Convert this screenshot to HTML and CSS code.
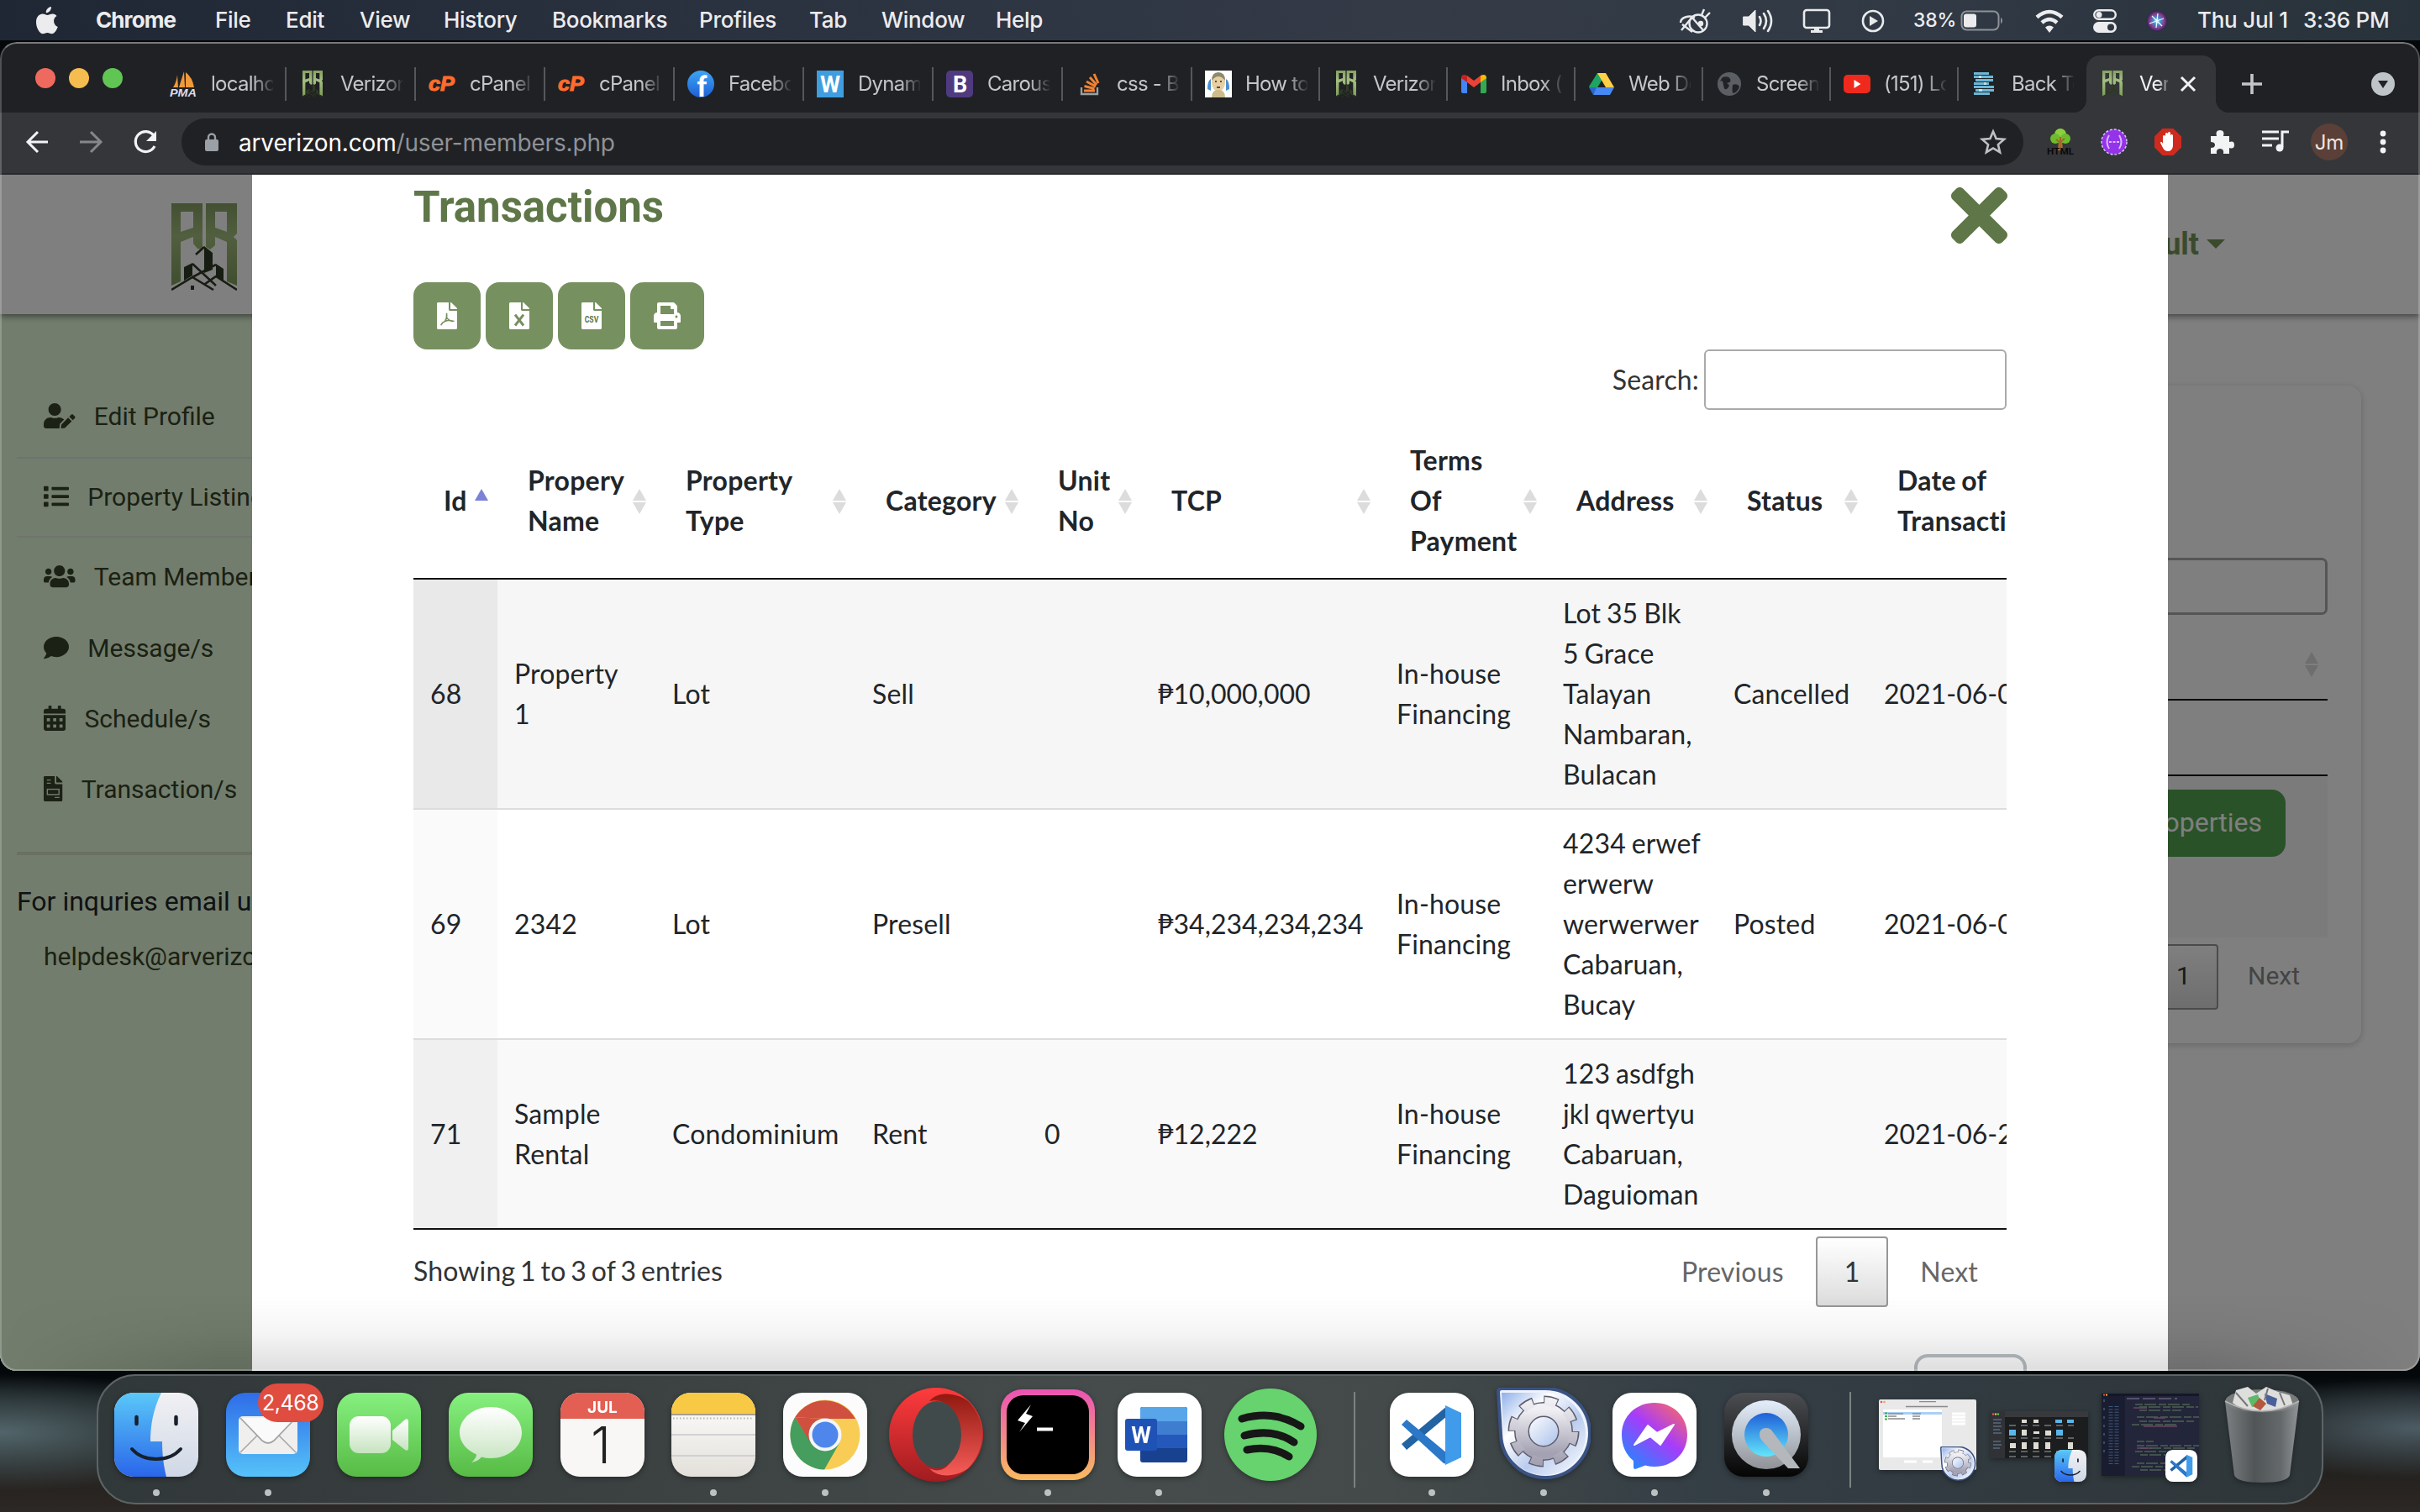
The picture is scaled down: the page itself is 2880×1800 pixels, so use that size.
FILE: index.html
```html
<!DOCTYPE html>
<html lang="en">
<head>
<meta charset="utf-8">
<title>Verizon - Transactions</title>
<link rel="stylesheet" href="styles.css">
</head>
<body>
<svg class="defs" width="0" height="0" aria-hidden="true">
  <defs>
    <linearGradient id="gFinder" x1="0" y1="0" x2="0" y2="1"><stop offset="0" stop-color="#5ac8f8"/><stop offset="1" stop-color="#2a66ea"/></linearGradient>
    <linearGradient id="gFinder2" x1="0" y1="0" x2="0" y2="1"><stop offset="0" stop-color="#f1f1f4"/><stop offset="1" stop-color="#cfd8e6"/></linearGradient>
    <linearGradient id="gMail" x1="0" y1="0" x2="0" y2="1"><stop offset="0" stop-color="#2e6ce8"/><stop offset="1" stop-color="#56c3f9"/></linearGradient>
    <linearGradient id="gGreen" x1="0" y1="0" x2="0" y2="1"><stop offset="0" stop-color="#86f07f"/><stop offset="1" stop-color="#57bb45"/></linearGradient>
    <linearGradient id="gWhite" x1="0" y1="0" x2="0" y2="1"><stop offset="0" stop-color="#ffffff"/><stop offset="1" stop-color="#c6e3bf"/></linearGradient>
    <linearGradient id="gPaper" x1="0" y1="0" x2="0" y2="1"><stop offset="0" stop-color="#ffffff"/><stop offset="1" stop-color="#e3e0da"/></linearGradient>
    <linearGradient id="gRed" x1="0" y1="0" x2="0" y2="1"><stop offset="0" stop-color="#ff3b3d"/><stop offset="1" stop-color="#a01c20"/></linearGradient>
    <linearGradient id="gRed2" x1="0" y1="0" x2="0" y2="1"><stop offset="0" stop-color="#911910"/><stop offset="1" stop-color="#f65c58"/></linearGradient>
    <linearGradient id="gHyper" x1="0" y1="0" x2="0" y2="1"><stop offset="0" stop-color="#ec53b4"/><stop offset="1" stop-color="#f8bb60"/></linearGradient>
    <linearGradient id="gMsgr" x1="0.9" y1="0" x2="0.1" y2="1"><stop offset="0" stop-color="#fd6a64"/><stop offset="0.45" stop-color="#a63cfb"/><stop offset="1" stop-color="#1a8cff"/></linearGradient>
    <linearGradient id="gQt" x1="0" y1="0" x2="0" y2="1"><stop offset="0" stop-color="#4c4e52"/><stop offset="1" stop-color="#050505"/></linearGradient>
    <linearGradient id="gQtR" x1="0" y1="0" x2="0" y2="1"><stop offset="0" stop-color="#e4eefc"/><stop offset="1" stop-color="#8f9296"/></linearGradient>
    <linearGradient id="gQtB" x1="0" y1="0" x2="0" y2="1"><stop offset="0" stop-color="#1f5fd8"/><stop offset="1" stop-color="#63e6fb"/></linearGradient>
    <linearGradient id="gGear" x1="0" y1="0" x2="1" y2="1"><stop offset="0" stop-color="#8fb0ea"/><stop offset="0.3" stop-color="#ffffff"/><stop offset="0.6" stop-color="#b9cbee"/><stop offset="1" stop-color="#ffffff"/></linearGradient>
    <linearGradient id="gCog" x1="0" y1="0" x2="0" y2="1"><stop offset="0" stop-color="#f0f0f4"/><stop offset="1" stop-color="#a3a1b2"/></linearGradient>
    <linearGradient id="gCan" x1="0" y1="0" x2="1" y2="0"><stop offset="0" stop-color="#85888a"/><stop offset="0.4" stop-color="#55595b"/><stop offset="0.75" stop-color="#6a6e70"/><stop offset="1" stop-color="#9b9ea0"/></linearGradient>
    <linearGradient id="gFb" x1="0" y1="0" x2="0" y2="1"><stop offset="0" stop-color="#3da5f5"/><stop offset="1" stop-color="#1d5fd6"/></linearGradient>
    <linearGradient id="gLogo" x1="0" y1="0" x2="0" y2="1"><stop offset="0" stop-color="#86a062"/><stop offset="0.4" stop-color="#a3bf80"/><stop offset="1" stop-color="#7f9c5c"/></linearGradient>
    <radialGradient id="gSiri"><stop offset="0" stop-color="#cfe9f6"/><stop offset="0.35" stop-color="#3f8fd0"/><stop offset="0.7" stop-color="#8a3a8c"/><stop offset="1" stop-color="#26264c"/></radialGradient>
  </defs>
  <symbol id="finder" viewBox="0 0 100 100">
    <rect width="100" height="100" rx="23" fill="url(#gFinder2)"/>
    <path d="M56 0C46 20 43 40 43 58h14c0 16 2 30 5 42H23A23 23 0 0 1 0 77V23A23 23 0 0 1 23 0z" fill="url(#gFinder)"/>
    <path d="M26.500 29v8M73.500 29v8" stroke="#17202c" stroke-width="4.500" stroke-linecap="round"/>
    <path d="M21 67c14 16 44 16 58 0" fill="none" stroke="#17202c" stroke-width="4" stroke-linecap="round"/>
  </symbol>
  <symbol id="vscode" viewBox="0 0 100 100">
    <rect width="100" height="100" rx="23" fill="#fff"/>
    <path d="M14 61l6 7 48-40V16z" fill="#2163a3"/>
    <path d="M14 38l6-6 48 40v13l-4-1z" fill="#2b78c8"/>
    <path d="M66 15l19 9v53l-19 9z" fill="#419beb"/>
  </symbol>
  <symbol id="cog" viewBox="0 0 112 112">
    <path d="M2 5q0-4 4-4h52a53 53 0 1 1-53 54z" fill="#eef3fc" stroke="#3a5384" stroke-width="4"/>
    <path d="M6 6h52a49 49 0 1 1-50 50z" fill="url(#gGear)"/>
    <circle cx="56" cy="52" r="26" fill="none" stroke="#5e5d6e" stroke-width="18"/>
    <circle cx="56" cy="52" r="36" fill="none" stroke="#5e5d6e" stroke-width="13" stroke-dasharray="16 12.270"/>
    <circle cx="56" cy="52" r="26" fill="none" stroke="url(#gCog)" stroke-width="15"/>
    <circle cx="56" cy="52" r="36" fill="none" stroke="url(#gCog)" stroke-width="10" stroke-dasharray="14 14.270" stroke-dashoffset="-1"/>
  </symbol>
  <symbol id="ar" viewBox="0 0 78 104">
    <path d="M0 0h37v55l-6-1-5-6v-8l-15 6v47L0 98zM11 10v24l15-5V10zM41 0h37v36l-4 4 4 4v54l-12-5V46l-14-6v10l-6 5-5-3zM52 10v19l14 5V10z" fill="url(#gLogo)" fill-rule="evenodd"/>
    <path d="M39 51l10 8v20l-10 4zM15 76l10-5v15l-10 6zM53 72l9 6v16l-9-7z" class="ar-tower"/>
    <path d="M0 103l25-15 25 15M29 61l10-9M25 72l28 26M25 88l28-15M40 96l13-9 25 16" fill="none" class="ar-roof"/>
    <path d="M23 98h4v5h-4z" class="ar-tower"/>
  </symbol>
  <symbol id="file" viewBox="0 0 384 512"><path d="M224 136V0H24C10.700 0 0 10.700 0 24v464c0 13.300 10.700 24 24 24h336c13.300 0 24-10.700 24-24V160H248c-13.200 0-24-10.800-24-24zM384 121.900v6.100H256V0h6.100c6.400 0 12.500 2.500 17 7l97.900 98c4.500 4.500 7 10.600 7 16.900z"/></symbol>
</svg>

<div class="desktop">
  <header class="menubar">
    <nav class="menus">
      <svg class="apple" width="28" height="34" viewBox="0 0 28 34"><path d="M19 1c.300 4-2.800 7.300-6.200 7.300C12.300 4.800 15.600 1.500 19 1zM25.500 12c-5.200 3-4.200 10.800 1.300 13-1.300 3.500-4 8.300-7 8.300-2.200 0-2.800-1.300-5.400-1.300s-3.400 1.300-5.400 1.300C5.200 33.300 1 26 1 19.500 1 13 4.800 9.600 8.700 9.600c2.400 0 4.300 1.500 5.700 1.500 1.500 0 3.600-1.700 6.500-1.600 1.900.100 3.500.900 4.600 2.500z" fill="#ececee"/></svg>
      <b>Chrome</b><span>File</span><span>Edit</span><span>View</span><span>History</span><span>Bookmarks</span><span>Profiles</span><span>Tab</span><span>Window</span><span>Help</span>
    </nav>
    <div class="status">
      <svg width="40" height="32" viewBox="0 0 40 32" fill="none" stroke="#e8eaec" stroke-width="2.400"><circle cx="24" cy="19" r="10.500"/><path d="M3 18c0-7 11-9 17-6M4 27L18 10M5 20l12 9M16 11l14 16M28 9l3-7M32 12l6-6"/><circle cx="27" cy="19" r="2" fill="#e8eaec"/></svg>
      <svg width="40" height="32" viewBox="0 0 40 32" fill="none" stroke="#e8eaec" stroke-width="2.600" stroke-linecap="round"><path d="M2 11h6l8-8v26l-8-8H2z" fill="#e8eaec" stroke-linejoin="round" stroke-width="1"/><path d="M21 11q3 5 0 10M26 7q6 9 0 18M31 4q8 12 0 24"/></svg>
      <svg width="34" height="32" viewBox="0 0 34 32"><rect x="2" y="3" width="30" height="21" rx="3" fill="none" stroke="#e8eaec" stroke-width="2.600"/><path d="M14 24h6v3h4v3H10v-3h4z" fill="#e8eaec"/></svg>
      <svg width="28" height="32" viewBox="0 0 28 32"><circle cx="14" cy="16" r="12" fill="none" stroke="#e8eaec" stroke-width="2.600"/><path d="M10 10l10 6-10 6z" fill="#e8eaec"/></svg>
      <span class="percent">38%</span>
      <svg width="52" height="32" viewBox="0 0 52 32"><rect x="1.500" y="4.500" width="44" height="22" rx="6" fill="none" stroke="#8e9298" stroke-width="2"/><rect x="4" y="7.500" width="15" height="16" rx="3" fill="#ececee"/><path d="M48 11.500q4 4 0 8z" fill="#8e9298"/></svg>
      <svg width="34" height="32" viewBox="0 0 34 32" fill="none" stroke="#ececee" stroke-width="4.500"><path d="M2 11.500q15-13 30 0M8 18q9-8 18 0"/><path d="M17 30l-5-6.500q5-4 10 0z" fill="#ececee" stroke="none"/></svg>
      <svg width="30" height="32" viewBox="0 0 30 32"><rect x="2.200" y="3.200" width="25.600" height="10.600" rx="5.300" fill="none" stroke="#ececee" stroke-width="2.400"/><circle cx="8" cy="8.500" r="3.500" fill="#ececee"/><rect x="1" y="17" width="28" height="13" rx="6.500" fill="#ececee"/><circle cx="22" cy="23.500" r="4" fill="#2f3842"/></svg>
      <svg width="28" height="32" viewBox="0 0 28 32"><circle cx="14" cy="16" r="12.500" fill="url(#gSiri)"/><path d="M15 7l-2 17M5 19l17-6M8 10l12 12" stroke="#e6fbff" stroke-width="1.300"/></svg>
      <span class="date">Thu Jul 1</span><span class="time">3:36 PM</span>
    </div>
  </header>

  <main class="window">
    <div class="tabstrip">
      <div class="lights"><i class="red"></i><i class="amber"></i><i class="green"></i></div>
      <div class="tab"><svg class="fav" viewBox="0 0 32 32"><path d="M4 20q4-6 5-15l1 15zM11 20Q14 10 17 1l1 19zM19 20V2q8 6 10 18z" fill="#f09a3a"/><text x="0" y="31" font-size="12" textLength="32" lengthAdjust="spacingAndGlyphs" class="bi" fill="#dcdcf0">PMA</text></svg><span>localhost</span></div>
      <div class="tab"><svg class="fav"><use href="#ar"/></svg><span>Verizon</span></div>
      <div class="tab"><svg class="fav" viewBox="0 0 32 32"><text x="0" y="24" font-size="24" textLength="31" lengthAdjust="spacingAndGlyphs" class="bi" fill="#ff6c2c" stroke="#ff6c2c">cP</text></svg><span>cPanel</span></div>
      <div class="tab"><svg class="fav" viewBox="0 0 32 32"><text x="0" y="24" font-size="24" textLength="31" lengthAdjust="spacingAndGlyphs" class="bi" fill="#ff6c2c" stroke="#ff6c2c">cP</text></svg><span>cPanel</span></div>
      <div class="tab"><svg class="fav" viewBox="0 0 32 32"><circle cx="16" cy="16" r="16" fill="url(#gFb)"/><text x="17.500" y="31" font-size="33" text-anchor="middle" class="bd" fill="#fff">f</text></svg><span>Facebook</span></div>
      <div class="tab"><svg class="fav" viewBox="0 0 32 32"><rect width="32" height="32" fill="#3f9de0"/><text x="16" y="26" font-size="28" textLength="24" lengthAdjust="spacingAndGlyphs" text-anchor="middle" class="bd" fill="#fff">W</text></svg><span>Dynamic</span></div>
      <div class="tab"><svg class="fav" viewBox="0 0 32 32"><rect width="32" height="32" rx="5" fill="#4f3a80"/><text x="16.500" y="25.500" font-size="27" text-anchor="middle" class="bd" fill="#fff">B</text></svg><span>Carousel</span></div>
      <div class="tab"><svg class="fav" viewBox="0 0 32 32" fill="none" stroke-width="2.400"><path d="M7 20v8h19v-8" stroke="#9aa0a4"/><path d="M10 24h13M10.500 18.500l12 3M13 13l11 6M17 8l8 9M22 4l5 11" stroke="#f28232" stroke-width="3"/></svg><span>css - Boot</span></div>
      <div class="tab narrow"><svg class="fav" viewBox="0 0 32 32"><rect width="32" height="32" fill="#fff"/><path d="M3 22q0-10 4-12v14zM29 22q0-10-4-12v14z" fill="#4b8fd0"/><ellipse cx="16" cy="14" rx="8" ry="11" fill="#e6cfa2"/><path d="M8 12q0-10 8-10t8 10q-4-5-8-5t-8 5z" fill="#8b8a6c"/><path d="M8 32q0-9 8-9t8 9z" fill="#cdbb8c"/><path d="M12 13h2M18 13h2M14 20h4" stroke="#6b4c33" stroke-width="2"/></svg><span>How to</span></div>
      <div class="tab narrow"><svg class="fav"><use href="#ar"/></svg><span>Verizon</span></div>
      <div class="tab narrow"><svg class="fav" viewBox="0 0 32 32"><path d="M1 8v17q0 2 2 2h5V13z" fill="#4285f4"/><path d="M31 8v17q0 2-2 2h-5V13z" fill="#34a853"/><path d="M8 14V6l8 6 8-6v8l-8 6z" fill="#ea4335"/><path d="M1 8q1-5 7-2v8l-7-5z" fill="#c5221f"/><path d="M31 8q-1-5-7-2v8l7-5z" fill="#fbbc04"/></svg><span>Inbox (1)</span></div>
      <div class="tab narrow"><svg class="fav" viewBox="0 0 32 32"><path d="M11 3h10l-5 9-9 15-6-8z" fill="#1fa463"/><path d="M11 3h10l10 17H21z" fill="#ffcf48"/><path d="M10 20h21l-5 9H6z" fill="#4688f4"/><path d="M1 20l9 0-4 9z" fill="#2a66cc"/></svg><span>Web Dev</span></div>
      <div class="tab narrow"><svg class="fav" viewBox="0 0 32 32"><circle cx="16" cy="16" r="14" fill="#5b5e62"/><path d="M8 8q7-2 9 2t-4 5q5 2 1 6t-5-4-5-3zM20 17q6-2 8 2-2 7-8 8-1-5 0-10z" fill="#212225"/></svg><span>Screen</span></div>
      <div class="tab narrow"><svg class="fav" viewBox="0 0 32 32"><rect y="5" width="32" height="22" rx="5" fill="#f0291d"/><path d="M12.500 11l8 5-8 5z" fill="#fff"/></svg><span>(151) Lo</span></div>
      <div class="tab narrow last"><svg class="fav" viewBox="0 0 32 32" stroke="#6cb7d6" stroke-width="3" fill="none"><path d="M3 3.500h18M3 7.500h23M5 11.500h21M3 15.500h18M3 19.500h24M5 23.500h22M3 27.500h19" /><path d="M9 7.500h3M15 15.500h3M9 23.500h4" stroke="#bfe2ee"/></svg><span>Back To</span></div>
      <div class="tab active"><svg class="fav"><use href="#ar"/></svg><span>Verizon</span><svg class="x" width="20" height="20" viewBox="0 0 20 20"><path d="M2 2l16 16M18 2L2 18" stroke="#f1f3f4" stroke-width="3"/></svg></div>
      <svg class="plus" width="26" height="26" viewBox="0 0 26 26"><path d="M13 1v24M1 13h24" stroke="#c3c6c9" stroke-width="3.600"/></svg>
      <svg class="drop" width="28" height="28" viewBox="0 0 28 28"><circle cx="14" cy="14" r="14" fill="#bfc4c9"/><path d="M8 10h12l-6 9z" fill="#202124"/></svg>
    </div>

    <div class="toolbar">
      <svg width="64" height="32" viewBox="0 0 64 32" fill="none" stroke="#f1f3f4" stroke-width="3"><path d="M57 16H34M45 4L33 16l12 12"/></svg>
      <svg width="64" height="32" viewBox="0 0 64 32" fill="none" stroke="#85878a" stroke-width="3"><path d="M31 16h24M44 4l12 12-12 12"/></svg>
      <svg width="64" height="32" viewBox="0 0 64 32" fill="none" stroke="#f1f3f4" stroke-width="3.200"><path d="M55 8.500A12 12 0 1 0 56 21"/><path d="M58 3v12H46z" fill="#f1f3f4" stroke="none"/></svg>
      <div class="omnibox">
        <svg width="18" height="24" viewBox="0 0 18 24"><rect x="1" y="9" width="16" height="14" rx="2" fill="#9aa0a6"/><path d="M5 9V6.500a4 4 0 0 1 8 0V9" fill="none" stroke="#9aa0a6" stroke-width="2.400"/></svg>
        <span class="url"><b>arverizon.com</b>/user-members.php</span>
        <svg class="star" width="32" height="32" viewBox="0 0 32 32"><path d="M16 3.500l3.600 8.600 9.400.800-7.100 6.200 2.200 9.100L16 23.400l-8.100 4.800 2.200-9.100L3 12.900l9.400-.800z" fill="none" stroke="#bdc1c6" stroke-width="2.600"/></svg>
      </div>
      <div class="exts">
        <svg width="32" height="32" viewBox="0 0 32 32"><path d="M14 14h4l1 12h-6z" fill="#b5702c"/><circle cx="16" cy="7" r="7" fill="#8bd13f"/><circle cx="10" cy="12" r="6" fill="#6cbc2c"/><circle cx="22" cy="12" r="6" fill="#6cbc2c"/><path d="M16 24V10M16 16l5-4M16 17l-5-4" stroke="#a2662b" stroke-width="2"/><text x="0" y="31" font-size="10" textLength="32" lengthAdjust="spacingAndGlyphs" class="bd" fill="#0a0a0a">HTML</text></svg>
        <svg width="32" height="32" viewBox="0 0 32 32"><circle cx="16" cy="16" r="15" fill="#9333ea" stroke="#dcc0fa" stroke-width="1.500" stroke-dasharray="3 2"/><path d="M10 8q-5 8 0 16M22 8q5 8 0 16M10 16h3M14.500 16h3M19 16h3" stroke="#d9b8ff" stroke-width="2" fill="none"/></svg>
        <svg width="32" height="32" viewBox="0 0 32 32"><path d="M9.500 0h13L32 9.500v13L22.500 32h-13L0 22.500v-13z" fill="#cf2a1e"/><path d="M10 18v-9q1.500-2 3 0V6q1.500-2 3 0V5q1.500-2 3 0v3q1.500-2 3 0v13q-1 6-6 6-4 0-6-4l-3-6q1-3 3 1z" fill="#fff"/></svg>
        <svg width="32" height="32" viewBox="0 0 32 32"><path d="M3 9h7q-2-7 4-7t4 7h7v7q6-2 6 3.500T25 23v7h-7q1-6-4-6t-4 6H3v-7q5 0 5-3.500T3 16z" fill="#f1f3f4"/></svg>
        <svg width="32" height="32" viewBox="0 0 32 32"><path d="M0 4h20M0 12h20M0 20h12" stroke="#f1f3f4" stroke-width="3"/><path d="M24 22V4h8" stroke="#f1f3f4" stroke-width="3" fill="none"/><circle cx="21" cy="23" r="4.500" fill="#f1f3f4"/></svg>
      </div>
      <span class="avatar">Jm</span>
      <svg width="8" height="28" viewBox="0 0 8 28" fill="#f1f3f4"><circle cx="4" cy="4" r="3.400"/><circle cx="4" cy="14" r="3.400"/><circle cx="4" cy="24" r="3.400"/></svg>
    </div>

    <section class="page">
      <div class="navbar">
        <svg class="logo" width="78" height="104"><use href="#ar"/></svg>
        <span class="account">Default<i></i></span>
      </div>
      <div class="layout">
        <aside class="sidebar">
          <a class="item edit"><svg width="37.500" height="30" viewBox="0 0 640 512"><path d="M224 256c70.700 0 128-57.300 128-128S294.700 0 224 0 96 57.300 96 128s57.300 128 128 128zm89.600 32h-16.700c-22.200 10.200-46.900 16-72.900 16s-50.600-5.800-72.900-16h-16.700C60.200 288 0 348.200 0 422.400V464c0 26.500 21.500 48 48 48h274.900c-2.400-6.800-3.400-14-2.600-21.300l6.800-60.900 1.200-11.100 7.900-7.900 77.300-77.300c-24.500-27.700-60-45.500-99.900-45.500zm45.300 145.300l-6.800 61c-1.100 10.200 7.500 18.800 17.600 17.600l60.900-6.800 137.900-137.900-71.700-71.700-137.900 137.800zM633 268.900L595.100 231c-9.300-9.300-24.500-9.300-33.800 0l-37.800 37.800-4.100 4.100 71.800 71.700 41.800-41.800c9.300-9.400 9.300-24.500 0-33.900z"/></svg>Edit Profile</a>
          <a class="item listing"><svg width="30" height="30" viewBox="0 0 512 512"><rect y="48" width="96" height="96" rx="16"/><rect y="208" width="96" height="96" rx="16"/><rect y="368" width="96" height="96" rx="16"/><rect x="160" y="64" width="352" height="64" rx="16"/><rect x="160" y="224" width="352" height="64" rx="16"/><rect x="160" y="384" width="352" height="64" rx="16"/></svg>Property Listings</a>
          <a class="item team"><svg width="37.500" height="30" viewBox="0 0 640 512"><path d="M96 224c35.300 0 64-28.700 64-64s-28.700-64-64-64-64 28.700-64 64 28.700 64 64 64zm448 0c35.300 0 64-28.700 64-64s-28.700-64-64-64-64 28.700-64 64 28.700 64 64 64zm32 32h-64c-17.600 0-33.500 7.100-45.100 18.600 40.300 22.100 68.900 62 75.100 109.400h66c17.700 0 32-14.300 32-32v-32c0-35.300-28.700-64-64-64zm-256 0c61.900 0 112-50.100 112-112S381.900 32 320 32 208 82.100 208 144s50.100 112 112 112zm76.800 32h-8.300c-20.800 10-43.900 16-68.500 16s-47.600-6-68.500-16h-8.300C179.600 288 128 339.600 128 403.200V432c0 26.500 21.500 48 48 48h288c26.500 0 48-21.500 48-48v-28.800c0-63.600-51.600-115.200-115.200-115.200zm-223.700-13.400C161.500 263.100 145.600 256 128 256H64c-35.300 0-64 28.700-64 64v32c0 17.700 14.300 32 32 32h65.900c6.300-47.400 34.900-87.300 75.200-109.400z"/></svg>Team Members</a>
          <a class="item"><svg width="30" height="30" viewBox="0 0 512 512"><path d="M256 32C114.600 32 0 125.100 0 240c0 49.600 21.400 95 57 130.700C44.500 421.100 2.700 466 2.200 466.500c-2.200 2.300-2.800 5.700-1.500 8.700S4.800 480 8 480c66.300 0 116-31.800 140.600-51.400 32.700 12.300 69 19.400 107.400 19.400 141.400 0 256-93.100 256-208S397.400 32 256 32z"/></svg>Message/s</a>
          <a class="item"><svg width="26.250" height="30" viewBox="0 0 448 512"><path fill-rule="evenodd" d="M0 464c0 26 22 48 48 48h352c26 0 48-22 48-48V192H0zM64 256h64v64H64zM192 256h64v64h-64zM320 256h64v64h-64zM64 384h64v64H64zM192 384h64v64h-64zM320 384h64v64h-64zM400 64h-48V12c0-6-5-12-12-12h-40c-7 0-12 6-12 12v52H160V12c0-6-5-12-12-12h-40c-7 0-12 6-12 12v52H48C22 64 0 86 0 112v48h448v-48c0-26-22-48-48-48z"/></svg>Schedule/s</a>
          <a class="item"><svg width="22.500" height="30" viewBox="0 0 384 512"><use href="#file" width="384" height="512"/><path d="M64 80h80M64 144h80M224 432h96" stroke="#e5fbdb" stroke-width="20"/><rect x="74" y="266" width="236" height="108" fill="none" stroke="#e5fbdb" stroke-width="24"/></svg>Transaction/s</a>
          <hr>
          <p class="inquiries">For inquries email us</p>
          <p class="mail">helpdesk@arverizon.com</p>
        </aside>
        <div class="card">
          <div class="card-input"></div>
          <div class="card-head"><i class="sort"></i></div>
          <div class="card-row"></div>
          <div class="card-row tinted"><span class="btn-properties">Properties</span></div>
          <div class="card-pages"><span class="current">1</span><span>Next</span></div>
        </div>
      </div>
      <div class="overlay"></div>

      <div class="modal">
        <div class="modal-head">
          <h1>Transactions</h1>
          <svg width="67" height="67" viewBox="0 80 352 352"><path fill="#5f7748" d="M242.720 256l100.070-100.070c12.280-12.280 12.280-32.190 0-44.480l-22.240-22.240c-12.280-12.280-32.190-12.280-44.480 0L176 189.280 75.930 89.210c-12.280-12.280-32.190-12.280-44.480 0L9.210 111.450c-12.280 12.280-12.280 32.190 0 44.480L109.280 256 9.210 356.070c-12.280 12.280-12.280 32.190 0 44.480l22.240 22.240c12.280 12.280 32.200 12.280 44.480 0L176 322.720l100.070 100.070c12.280 12.280 32.200 12.280 44.480 0l22.240-22.240c12.280-12.280 12.280-32.190 0-44.480L242.720 256z"/></svg>
        </div>
        <div class="exports">
          <button><svg width="24" height="32" viewBox="0 0 384 512"><use href="#file" width="384" height="512"/><path d="M80 425q20-45 75-65 40-60 30-145M155 360q60-30 150-5-50 20-125-70" fill="none" stroke="#77905f" stroke-width="26" stroke-linecap="round"/></svg></button>
          <button><svg width="24" height="32" viewBox="0 0 384 512"><use href="#file" width="384" height="512"/><path d="M112 235l160 205M272 235L112 440" stroke="#77905f" stroke-width="48"/></svg></button>
          <button><svg width="24" height="32" viewBox="0 0 384 512"><use href="#file" width="384" height="512"/><text x="60" y="376" font-size="165" textLength="264" lengthAdjust="spacingAndGlyphs" class="bd" fill="#5d7844">CSV</text></svg></button>
          <button class="print"><svg width="32" height="32" viewBox="0 0 512 512"><path d="M448 192V77.250c0-8.490-3.370-16.620-9.370-22.630L393.370 9.370c-6-6-14.140-9.370-22.630-9.370H96C78.330 0 64 14.330 64 32v160c-35.350 0-64 28.650-64 64v112c0 8.840 7.160 16 16 16h48v96c0 17.670 14.330 32 32 32h320c17.670 0 32-14.330 32-32v-96h48c8.840 0 16-7.160 16-16V256c0-35.350-28.650-64-64-64zm-64 256H128v-96h256v96zm0-224H128V64h192v48c0 8.840 7.160 16 16 16h48v96zm48 72c-13.250 0-24-10.750-24-24 0-13.260 10.750-24 24-24s24 10.740 24 24c0 13.250-10.750 24-24 24z"/></svg></button>
        </div>
        <label class="filter">Search:<span class="field"></span></label>
        <div class="table-wrap">
          <table>
            <colgroup><col class="c-id"><col class="c-name"><col class="c-type"><col class="c-cat"><col class="c-unit"><col class="c-tcp"><col class="c-terms"><col class="c-addr"><col class="c-status"><col class="c-date"></colgroup>
            <thead><tr>
              <th>Id<i class="sort asc"></i></th><th>Propery<br>Name<i class="sort"></i></th><th>Property<br>Type<i class="sort"></i></th><th>Category<i class="sort"></i></th><th>Unit<br>No<i class="sort"></i></th><th>TCP<i class="sort"></i></th><th>Terms<br>Of<br>Payment<i class="sort"></i></th><th>Address<i class="sort"></i></th><th>Status<i class="sort"></i></th><th>Date of<br>Transaction<i class="sort"></i></th>
            </tr></thead>
            <tbody>
              <tr class="r1"><td>68</td><td>Property<br>1</td><td>Lot</td><td>Sell</td><td></td><td class="num">₱10,000,000</td><td>In-house<br>Financing</td><td>Lot 35 Blk<br>5 Grace<br>Talayan<br>Nambaran,<br>Bulacan</td><td>Cancelled</td><td class="num">2021-06-03</td></tr>
              <tr class="r2"><td>69</td><td>2342</td><td>Lot</td><td>Presell</td><td></td><td class="num">₱34,234,234,234</td><td>In-house<br>Financing</td><td>4234 erwef<br>erwerw<br>werwerwer<br>Cabaruan,<br>Bucay</td><td>Posted</td><td class="num">2021-06-03</td></tr>
              <tr class="r3"><td>71</td><td>Sample<br>Rental</td><td>Condominium</td><td>Rent</td><td>0</td><td class="num">₱12,222</td><td>In-house<br>Financing</td><td>123 asdfgh<br>jkl qwertyu<br>Cabaruan,<br>Daguioman</td><td></td><td class="num">2021-06-29</td></tr>
            </tbody>
          </table>
        </div>
        <div class="table-foot">
          <span class="info">Showing 1 to 3 of 3 entries</span>
          <div class="pages"><span>Previous</span><span class="current">1</span><span>Next</span></div>
        </div>
        <div class="modal-foot"><span class="btn-outline"></span></div>
      </div>
      <div class="dock-shade"></div>
    </section>
  </main>

  <footer class="dock">
    <div class="app on"><svg width="100" height="100"><use href="#finder"/></svg></div>
    <div class="app on"><svg width="100" height="100" viewBox="0 0 100 100"><rect width="100" height="100" rx="23" fill="url(#gMail)"/><rect x="15" y="28" width="70" height="45" rx="5" fill="#f0efee"/><path d="M17 71l20-20M83 71L63 51" stroke="#a5a5a5" stroke-width="1.500"/><path d="M17 30l26 27q7 6 14 0l26-27" fill="#fafafa" stroke="#a5a5a5" stroke-width="1.800"/></svg><span class="badge">2,468</span></div>
    <div class="app"><svg width="100" height="100" viewBox="0 0 100 100"><rect width="100" height="100" rx="23" fill="url(#gGreen)"/><rect x="15" y="28" width="49" height="44" rx="11" fill="url(#gWhite)"/><path d="M66 45l15-13q4-2 4 2v32q0 4-4 2L66 56z" fill="url(#gWhite)"/></svg></div>
    <div class="app"><svg width="100" height="100" viewBox="0 0 100 100"><rect width="100" height="100" rx="23" fill="url(#gGreen)"/><path d="M50 17c20 0 37 13 37 30.500S70 78 50 78q-6 0-11-1.500-4 5-12 6.500 6-5 6-9.500C21 68 13 59 13 47.500 13 30 30 17 50 17z" fill="url(#gWhite)"/></svg></div>
    <div class="app"><svg width="100" height="100" viewBox="0 0 100 100"><rect width="100" height="100" rx="23" fill="#f8f7f5"/><path d="M0 31V23A23 23 0 0 1 23 0h54a23 23 0 0 1 23 23v8z" fill="#e35f53"/><text x="50" y="23.500" font-size="19" text-anchor="middle" class="ui b" fill="#fff">JUL</text><text x="48" y="84" font-size="60" text-anchor="middle" class="ui l" fill="#222">1</text></svg></div>
    <div class="app on"><svg width="100" height="100" viewBox="0 0 100 100"><rect width="100" height="100" rx="23" fill="url(#gPaper)"/><path d="M0 25v-2A23 23 0 0 1 23 0h54a23 23 0 0 1 23 23v2z" fill="#f8c944"/><path d="M0 26h100" stroke="#a89f8c" stroke-width="2"/><path d="M2 30.500h96" stroke="#b9b6b0" stroke-width="2" stroke-dasharray="1.500 2.500"/><path d="M0 50h100M0 75h100" stroke="#c9c8cc" stroke-width="1.600"/></svg></div>
    <div class="app on"><svg width="100" height="100" viewBox="0 0 100 100"><rect width="100" height="100" rx="23" fill="#fcfcfc"/><circle cx="50" cy="50" r="41.500" fill="#f9cd55"/><path d="M14.060 29.250A41.500 41.500 0 0 1 86 31H50z" fill="#d0503f"/><path d="M14 29.200L32 60l18-10V31z" fill="#d0503f"/><path d="M14 29.200A41.500 41.500 0 0 0 49 91.500L67 60 50 66 33 60z" fill="#459d5e"/><circle cx="50" cy="50" r="19.500" fill="#f4f6f8"/><circle cx="50" cy="50" r="15.500" fill="#4f86ec"/></svg></div>
    <div class="app"><svg width="112" height="112" viewBox="0 0 112 112"><circle cx="56" cy="56" r="56" fill="url(#gRed)"/><path d="M48 16C60 2 84 8 94 16a56 56 0 0 1 0 80C84 104 60 110 48 96c40 20 50-90 0-80z" fill="url(#gRed2)"/><ellipse cx="57" cy="56" rx="29" ry="40" fill="#414a4a"/></svg></div>
    <div class="app on"><svg width="112" height="108" viewBox="0 0 112 108"><rect width="112" height="108" rx="25" fill="url(#gHyper)"/><rect x="7" y="7" width="98" height="94" rx="20"/><path d="M36 18L20 37l9 3-7 11 16-19-8-3z" fill="#fff"/><path d="M43 47.500h19" stroke="#fff" stroke-width="4"/></svg></div>
    <div class="app on"><svg width="100" height="100" viewBox="0 0 100 100"><rect width="100" height="100" rx="23" fill="#fff"/><rect x="27" y="17" width="56" height="66" rx="3" fill="#18428f"/><path d="M27 66V20q0-3 3-3h50q3 0 3 3v46z" fill="#2459bb"/><path d="M27 50V20q0-3 3-3h50q3 0 3 3v30z" fill="#3f7dd0"/><path d="M27 34V20q0-3 3-3h50q3 0 3 3v14z" fill="#59a5ea"/><rect x="9" y="31" width="38" height="38" rx="3" fill="#1f52b5"/><text x="28" y="60" font-size="27" text-anchor="middle" class="bd" fill="#fff">W</text></svg></div>
    <div class="app"><svg width="110" height="110" viewBox="0 0 110 110"><circle cx="55" cy="55" r="55" fill="#66d36e"/><path d="M21 36q38-11 70 9M24 56q34-9 59 8M27 73q28-6 50 8" fill="none" stroke="#171717" stroke-linecap="round" stroke-width="9"/></svg></div>
    <i class="divider"></i>
    <div class="app on"><svg width="100" height="100"><use href="#vscode"/></svg></div>
    <div class="app on"><svg width="112" height="112"><use href="#cog"/></svg></div>
    <div class="app on"><svg width="100" height="100" viewBox="0 0 100 100"><rect width="100" height="100" rx="23" fill="#fff"/><path d="M50 12c22 0 39 16 39 38S72 88 50 88q-5 0-11-1.500L27 91q-2 0-2-3v-7C16 74 11 63 11 50c0-22 17-38 39-38z" fill="url(#gMsgr)"/><path d="M26 62l16-23 11 9 20-10-16 24-12-10z" fill="#fff" stroke="#fff" stroke-width="2" stroke-linejoin="round"/></svg></div>
    <div class="app on"><svg width="100" height="100" viewBox="0 0 100 100"><rect width="100" height="100" rx="23" fill="url(#gQt)"/><circle cx="50" cy="50" r="41" fill="url(#gQtR)"/><circle cx="50" cy="50" r="26" fill="url(#gQtB)"/><path d="M42 50q0-8 8-8 5 0 8 5l32 43H76L44 56q-2-3-2-6z" fill="#b4b8bd"/></svg></div>
    <i class="divider"></i>
    <div class="app"><svg width="116" height="112" viewBox="0 0 116 112"><rect y="14" width="116" height="84" rx="2" fill="#e9e9ea"/><rect x="5" y="26" width="70" height="57" fill="#fff"/><rect x="5" y="29" width="70" height="3" fill="#a9d0f7"/><circle cx="3" cy="17" r="1.300" fill="#e55"/><circle cx="6.500" cy="17" r="1.300" fill="#f96"/><path d="M48 16.700h20M32 22.500h50M11 31h18M11 34h10M11 37h20M40 31h10M40 34h9M40 37h9" stroke="#8b8b8e" stroke-width="1.300"/><path d="M87 31h16M87 35h16M87 39h16M87 43h16M30 88h15M52 88h12" stroke="#fff" stroke-width="3"/><path d="M7 30.500h3M7 34h3M7 37.500h3" stroke="#3bb44a" stroke-width="2"/><use href="#cog" x="72" y="70" width="44" height="42"/></svg></div>
    <div class="app"><svg width="116" height="112" viewBox="0 0 116 112"><rect y="28" width="116" height="56" rx="2" fill="#1c1d1f"/><rect y="28" width="17" height="56" fill="#303236"/><rect x="17" y="28" width="99" height="7" fill="#38393d"/><circle cx="3" cy="31.500" r="1.200" fill="#e55"/><circle cx="6" cy="31.500" r="1.200" fill="#fb4"/><circle cx="9" cy="31.500" r="1.200" fill="#5c5"/><path d="M3 38h10M3 42h9M3 46h10M3 50h8M3 54h10M3 64h9M3 68h10M3 72h8" stroke="#6886a5" stroke-width="1"/><path d="M37 38h6v4h-6zM51 38h6v4h-6zM37 50h6v7h-6zM23 66h7v6h-7zM37 65h6v8h-6zM51 65h6v8h-6zM65 65h6v8h-6zM92 65h6v8h-6zM51 52h7v3h-7zM65 51h7v6h-7z" fill="#dedbd2"/><path d="M77 38h8v4h-8zM91 38h8v4h-8zM22 50h8v7h-8zM78 50h8v7h-8z" fill="#58b7ea"/><path d="M22 60h77M22 76h60M22 45h77M22 82h60" stroke="#77787a" stroke-width="1.500" stroke-dasharray="8 6"/><use href="#finder" x="76" y="74" width="38" height="38"/></svg></div>
    <div class="app"><svg width="116" height="112" viewBox="0 0 116 112"><rect y="7" width="116" height="98" rx="2" fill="#23253a"/><rect y="7" width="28" height="98" fill="#1a1d30"/><rect y="7" width="116" height="3" fill="#151728"/><circle cx="3" cy="8.700" r="1.100" fill="#e55"/><circle cx="6" cy="8.700" r="1.100" fill="#fb4"/><path d="M3 14v70" stroke="#54789a" stroke-dasharray="3 7"/><path d="M11 22v70M18 22v70" stroke="#39597a" stroke-width="5" stroke-dasharray="1 2.400"/><path d="M30 13h60" stroke="#56526a" stroke-width="2" stroke-dasharray="15 4"/><path d="M40 20h66M45 23h70M45 27h50M42 35h74M45 40h66M36 44h56M42 64h20M42 69h74M46 72h65M40 76h60M46 80h30M42 90h34M36 94h40M46 98h30" stroke="#4d6152" stroke-width="1.600" stroke-dasharray="9 2 14 3"/><path d="M38 24h16M62 36h14M50 46h40M42 72h18" stroke="#6c4668" stroke-width="1.500"/><use href="#vscode" x="76" y="74" width="38" height="38"/></svg></div>
    <div class="app"><svg width="90" height="116" viewBox="0 0 90 116"><ellipse cx="45" cy="18" rx="44" ry="14" fill="#777b7c"/><path d="M10 20L14 5l14-4 10 8 12-8 14 6 14 4 4 12-12 7H24z" fill="#dedfdd"/><path d="M28 14l12-4 4 10-11 5z" fill="#5fb96a"/><path d="M48 9l15 6-2 10-10-4z" fill="#49609b"/><path d="M42 14l8 7-7 8-9-5z" fill="#b3593d"/><path d="M14 8l14 16M52 3l-4 14M66 8l6 15" stroke="#777" stroke-width="2"/><path d="M1 18q44 24 88 0l-11 88q-3 9-33 9t-33-9z" fill="url(#gCan)" opacity=".92"/><path d="M1 18q44 24 88 0" fill="none" stroke="#b2b4b5" stroke-width="1.500"/></svg></div>
  </footer>
</div>
</body>
</html>
```
FILE: styles.css
```css
* { box-sizing: border-box; }
body { margin: 0; background: #0b0e10; overflow: hidden; }
.defs { position: absolute; }
svg { display: block; flex: none; }
.bi { font-family: "Liberation Sans", sans-serif; font-weight: 700; font-style: italic; }
.bd { font-family: Roboto, sans-serif; font-weight: 700; }
.ui { font-family: Inter, sans-serif; }
.ui.b { font-weight: 700; }
.ui.l { font-weight: 300; }

.desktop {
  width: 2880px; height: 1800px; display: flex; flex-direction: column; align-items: center;
  background:
    radial-gradient(ellipse 300px 70px at 0 1705px, #52656a, transparent),
    radial-gradient(ellipse 260px 60px at 2880px 1700px, #4d5c64, transparent),
    linear-gradient(#05080b 0, #05080b 1640px, #111618 1665px, #2b2622 1790px, #2b2928 1800px);
}

/* macOS menu bar */
.menubar {
  width: 2880px; height: 48px; margin-bottom: 2px; display: flex; justify-content: space-between; align-items: center;
  background: linear-gradient(90deg, #1f2735, #2b3240 33%, #343b47 58%, #303944 80%, #28323a);
  color: #ececee; font: 500 26px/48px Inter, sans-serif; letter-spacing: -.300px;
}
.menus {
  display: grid; align-items: center; white-space: nowrap; padding-left: 42px;
  grid-template-columns: 72px 142px 84px 88px 100px 129px 175px 131px 86px 136px 60px;
}
.menus b { font-weight: 700; letter-spacing: -.900px; }
.status { display: grid; align-items: center; white-space: nowrap; padding-top: 2px; margin-right: 3px;
  grid-template-columns: 76px 72px 70px 62px 56px 89px 68px 63px 62px 126px 136px; }
.status .percent { font-size: 23px; }
.status span { margin-top: -2px; letter-spacing: -.250px; }

/* browser window */
.window { position: relative; width: 2880px; height: 1582px; border-radius: 20px; overflow: hidden; background: #202124; }
.window::after { content: ""; position: absolute; inset: 0; border: 2px solid rgba(255,255,255,.220); border-top-color: rgba(255,255,255,.400); border-radius: 20px; }
.tabstrip { display: flex; height: 84px; padding-top: 16px; align-items: center; font: 400 24px/32px Inter, sans-serif; color: #c4c7ca; }
.lights { width: 187px; padding: 0 0 14px 42px; display: flex; gap: 16px; }
.lights i { width: 24px; height: 24px; border-radius: 50%; }
.red { background: #ee6a5f; }
.amber { background: #f5bd4f; }
.green { background: #61c554; }
.tab { width: 154px; height: 40px; padding-left: 15px; border-right: 2px solid #55575b; display: flex; align-items: center; gap: 17px; }
.tab.narrow { width: 152px; gap: 16px; }
.tab.last { border-right-color: transparent; }
.tab span { width: 74px; overflow: hidden; white-space: nowrap; letter-spacing: -.750px; mask-image: linear-gradient(90deg, #000 50px, transparent 76px); }
.tab .fav { width: 32px; height: 32px; }
.ar-tower { fill: #2f3a24; }
.ar-roof { stroke: #2f3a24; stroke-width: 2.600; }
.tab.active { position: relative; width: 154px; height: 68px; padding-left: 15px; gap: 16px; border: 0; border-radius: 16px 16px 0 0; background: #35363a; }
.tab.active::before, .tab.active::after { content: ""; position: absolute; bottom: 0; width: 16px; height: 16px; }
.tab.active::before { left: -16px; background: radial-gradient(circle at 0 0, transparent 16px, #35363a 16.500px); }
.tab.active::after { right: -16px; background: radial-gradient(circle at 100% 0, transparent 16px, #35363a 16.500px); }
.tab.active span { width: 34px; color: #f1f3f4; mask-image: linear-gradient(90deg, #000 22px, transparent 38px); }
.tab.active .x { margin-left: -2px; }
.plus { margin-left: 30px; }
.drop { margin-left: 129px; }
.toolbar { display: flex; height: 74px; padding-bottom: 2px; align-items: center; background: #35363a; border-bottom: 2px solid #29292b; }
.omnibox { width: 2192px; height: 56px; margin-left: 24px; padding: 0 20px 0 27px; display: flex; align-items: center; border-radius: 28px; background: #202124; }
.url { margin: 2px 0 0 23px; flex: 1; font: 400 28px/56px Inter, sans-serif; color: #8f9296; letter-spacing: -.170px; }
.url b { font-weight: 400; color: #fff; }
.exts { display: flex; gap: 32px; margin-left: 28px; }
.avatar { width: 44px; height: 44px; margin: 0 38px 0 26px; border-radius: 50%; background: #5a4038; color: #eee5e0; font: 400 24px/46px Inter, sans-serif; text-align: center; }

/* page beneath the modal */
.page { position: relative; height: 1424px; background: #fff; overflow: hidden; font: 400 30px/45px Roboto, sans-serif; }
.navbar { position: relative; height: 166px; padding: 0 232px 0 204px; display: flex; justify-content: space-between; align-items: center; background: #fff; box-shadow: 0 2px 8px rgba(0,0,0,.550); }
.logo { margin-top: 6px; }
.account { display: flex; align-items: center; gap: 9px; color: #77955a; font-weight: 700; font-size: 36px; }
.account i { margin-top: -2px; border: 11px solid transparent; border-top-color: #77955a; border-bottom: 0; }
.layout { display: flex; height: 1258px; }
.sidebar { width: 420px; padding: 72px 0 0 20px; background: #e5fbdb; color: #364228; white-space: nowrap; }
.item { height: 84px; padding: 0 0 2px 32px; display: flex; align-items: center; gap: 22.300px; }
.item svg { fill: #364228; }
.item.edit { height: 100px; padding-bottom: 0; border-bottom: 2px solid #dfe6e0; }
.item.listing { height: 94px; border-bottom: 2px solid #dfe6e0; }
.item.team { height: 90px; padding-top: 4px; }
.sidebar hr { height: 4px; margin: 32px 0 0; border: 0; background: #d4e0c6; }
.sidebar p { margin: 0; }
.inquiries { padding-top: 31px; font-size: 32px; line-height: 48px; color: #212529; }
.mail { padding: 22px 0 0 32px; line-height: 40px; }
.card { width: 1400px; height: 783px; margin: 85px 70px 0 auto; padding: 205px 40px 0; border-radius: 16px; background: #fff; box-shadow: 0 2px 8px rgba(0,0,0,.200); }
.card-input { width: 360px; height: 68px; margin-left: auto; border: 3px solid #aaa; border-radius: 7px; }
.card-head { position: relative; height: 102px; border-bottom: 2px solid #111; }
.card-head .sort { top: 44px; }
.card-row { height: 90px; border-bottom: 2px solid #111; }
.card-row.tinted { height: 192px; padding: 16px 50px 0 0; border: 0; background: #f6f6f6; display: flex; justify-content: flex-end; align-items: flex-start; }
.btn-properties { height: 80px; padding: 0 28px; border-radius: 16px; background: #54a450; color: #fff; font-size: 32px; line-height: 78px; }
.card-pages { display: flex; justify-content: flex-end; padding-top: 8px; color: #888; }
.card-pages span { padding: 13px 31px 16px 33px; border: 2px solid transparent; line-height: 45px; }
.card-pages .current { border-color: #979797; border-radius: 4px; color: #333; background: linear-gradient(#fff, #dcdcdc); }
.overlay { position: absolute; inset: 0; background: rgba(0,0,0,.500); }

/* transactions modal */
.modal { position: absolute; top: 0; left: 300px; width: 2280px; height: 1424px; padding: 0 192px; background: #fff; color: #333; font: 400 32px/48px Lato, sans-serif; letter-spacing: .150px; }
.modal-head { height: 128px; padding-top: 9px; display: flex; justify-content: space-between; align-items: flex-start; }
.modal-head svg { margin: 6px -1px 0 0; }
h1 { margin: 0; font: 700 51px/60px Roboto, sans-serif; letter-spacing: 0; color: #5f7748; }
.exports { display: flex; gap: 6px; }
.exports button { width: 80px; height: 80px; padding: 0; display: flex; align-items: center; justify-content: center; border: 0; border-radius: 16px; background: #77905f; }
.exports button.print { width: 88px; }
.exports svg { fill: #fff; }
.filter { display: flex; height: 72px; justify-content: flex-end; align-items: center; gap: 6px; }
.field { width: 360px; height: 72px; border: 2px solid #aaa; border-radius: 6px; }
.table-wrap { margin-top: 16px; overflow: hidden; }
table { width: 1970px; table-layout: fixed; border-collapse: separate; border-spacing: 0; color: #212529; border-bottom: 2px solid #111; word-spacing: -1.500px; }
.c-id { width: 100px; } .c-name { width: 188px; } .c-type { width: 238px; } .c-cat { width: 205px; } .c-unit { width: 135px; }
.c-tcp { width: 284px; } .c-terms { width: 198px; } .c-addr { width: 203px; } .c-status { width: 179px; } .c-date { width: 240px; }
th { position: relative; height: 186px; padding: 0 0 0 36px; text-align: left; font-weight: 700; letter-spacing: .250px; border-bottom: 2px solid #111; white-space: nowrap; }
td { padding: 16px 0 16px 20px; border-top: 2px solid #ddd; white-space: nowrap; }
td.num { letter-spacing: 0; }
.r1 td { border-top: 0; background: #f6f6f6; }
.r1 td:first-child { background: #e9e9e9; }
.r2 td:first-child { background: #fafafa; }
.r3 td { background: #f9f9f9; }
.r3 td:first-child { background: #f0f0f0; }
.sort { position: absolute; right: 11px; top: 78px; width: 16px; height: 30px; display: flex; flex-direction: column; justify-content: space-between; }
.sort::before { content: ""; border: 8px solid transparent; border-top: 0; border-bottom: 14px solid #dcdcdc; }
.sort::after { content: ""; border: 8px solid transparent; border-bottom: 0; border-top: 14px solid #dcdcdc; }
.sort.asc::before { border-bottom-color: #7b82d8; }
.sort.asc::after { border-top-color: transparent; }
.table-foot { height: 148px; padding-top: 8px; display: flex; justify-content: space-between; align-items: flex-start; }
.info { margin-top: 17px; word-spacing: -2.500px; }
.pages { display: flex; gap: 4px; color: #666; }
.pages span { padding: 16px 32px; border: 2px solid transparent; border-radius: 4px; }
.pages .current { color: #333; border-color: #979797; background: linear-gradient(#fff, #dcdcdc); }
.modal-foot { display: flex; justify-content: flex-end; margin-right: -24px; }
.btn-outline { width: 134px; height: 80px; border: 4px solid #b9bfc4; border-radius: 16px; }
.dock-shade { position: absolute; left: 0; right: 0; bottom: 0; height: 90px; background: linear-gradient(transparent, rgba(0,0,0,.040) 50%, rgba(0,0,0,.130)); mask-image: linear-gradient(90deg, transparent, #000 260px, #000 2620px, transparent); }

/* dock */
.dock { width: 2650px; height: 155px; margin-top: 4px; padding-left: 3px; display: flex; border: 2px solid #5d6466; border-radius: 46px; background: linear-gradient(90deg, #313839, #3c4141 25%, #454c4b 45%, #444a49 58%, #343e45 72%, #2e3639); }
.app { position: relative; width: 132.600px; height: 142px; display: flex; align-items: center; justify-content: center; flex: none; }
.app > svg { margin-top: -2px; filter: drop-shadow(0 2px 3px rgba(0,0,0,.350)); }
.app.on::after { content: ""; position: absolute; left: 62px; bottom: -1px; width: 8px; height: 8px; border-radius: 50%; background: #bdc1c1; }
.badge { position: absolute; top: 9px; left: 54px; width: 78px; height: 46px; border-radius: 23px; background: #e04c3f; color: #fff; font: 400 25px/46px Inter, sans-serif; letter-spacing: -.500px; text-align: center; }
.divider { width: 2px; height: 114px; margin: 19px 25px 0 32.400px; background: #7c8283; flex: none; }
```
